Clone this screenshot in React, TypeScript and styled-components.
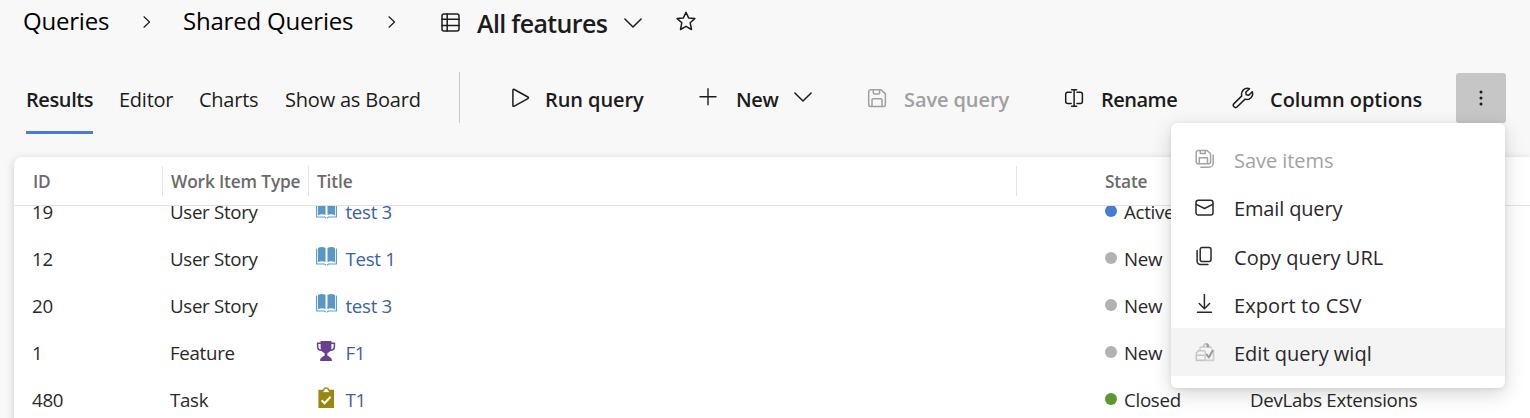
import React from "react";
import styled, { createGlobalStyle } from "styled-components";

const Global = createGlobalStyle`
  * { box-sizing: border-box; }
  body { margin: 0; background: #f8f8f8; overflow: hidden; }
`;

const Page = styled.div`
  width: 1530px;
  height: 418px;
  overflow: hidden;
  display: flex;
  flex-direction: column;
  background: #f8f8f8;
  color: #1c1c1c;
  font-family: "Open Sans", "Noto Sans", sans-serif;
`;

const Breadcrumb = styled.header`
  flex: none;
  height: 44px;
  padding-left: 23px;
  display: flex;
  align-items: center;
`;

const Crumb = styled.span<{ $width: number; $left?: number }>`
  width: ${(p) => p.$width}px;
  margin-left: ${(p) => p.$left ?? 0}px;
  margin-top: -2px;
  letter-spacing: -0.2px;
  font-size: 24px;
  line-height: 44px;
  color: #000;
  white-space: nowrap;
`;

const PageTitle = styled.h1`
  margin: 2px 0 0 17px;
  width: 144px;
  font-size: 25px;
  font-weight: 600;
  letter-spacing: -0.65px;
  line-height: 40px;
  white-space: nowrap;
`;

const Glyph = styled.svg<{ $left?: number; $lift?: number }>`
  display: block;
  flex: none;
  margin-left: ${(p) => p.$left ?? 0}px;
  margin-bottom: ${(p) => p.$lift ?? 0}px;
  fill: none;
  stroke: currentColor;
  stroke-width: 1.5;
  stroke-linecap: round;
  stroke-linejoin: round;
`;

const Toolbar = styled.nav`
  flex: none;
  height: 113px;
  padding: 28px 0 0 26px;
  display: flex;
  align-items: flex-start;
`;

const Tab = styled.a<{ $width: number; $spacing: number; $active?: boolean }>`
  width: ${(p) => p.$width}px;
  height: 62px;
  margin-right: 26px;
  border-bottom: 3px solid ${(p) => (p.$active ? "#4a7bd8" : "transparent")};
  font-size: 20px;
  font-weight: ${(p) => (p.$active ? 600 : 400)};
  letter-spacing: ${(p) => p.$spacing}px;
  line-height: 55px;
  white-space: nowrap;
`;

const Divider = styled.div`
  width: 1px;
  height: 51px;
  margin: 0 50px 0 12px;
  background: #c8c8c8;
`;

const Command = styled.button<{ $width: number; $spacing: number; $disabled?: boolean }>`
  width: ${(p) => p.$width}px;
  height: 51px;
  padding: 0;
  border: 0;
  background: none;
  display: flex;
  align-items: center;
  color: ${(p) => (p.$disabled ? "#a0a0a0" : "#1c1c1c")};
  font: 600 20px "Open Sans", sans-serif;
  letter-spacing: ${(p) => p.$spacing}px;
  line-height: 51px;
  white-space: nowrap;
`;

const CommandLabel = styled.span<{ $gap: number; $width?: number }>`
  margin: 4px 0 0 ${(p) => p.$gap}px;
  width: ${(p) => (p.$width ? p.$width + "px" : "auto")};
  text-align: left;
`;

const MoreAnchor = styled.div`
  position: relative;
  padding-top: 1px;
`;

const MoreButton = styled.button`
  width: 50px;
  height: 50px;
  padding: 0;
  border: 0;
  border-radius: 3px;
  background: #c6c6c6;
  color: #1c1c1c;
  display: flex;
  align-items: center;
  justify-content: center;
`;

const Menu = styled.div`
  position: absolute;
  z-index: 2;
  top: 51px;
  right: 1px;
  width: 334px;
  height: 265px;
  padding: 13px 0 12px;
  border-radius: 6px;
  background: #fff;
  box-shadow: 0 6px 20px rgba(0, 0, 0, 0.16), 0 1px 5px rgba(0, 0, 0, 0.08);
`;

const MenuItem = styled.div<{ $spacing: number; $disabled?: boolean; $hover?: boolean }>`
  height: 48px;
  padding-left: 24px;
  display: flex;
  align-items: center;
  background: ${(p) => (p.$hover ? "#f4f4f4" : "transparent")};
  color: ${(p) => (p.$disabled ? "#a3a3a3" : "#292929")};
  font-size: 20px;
  letter-spacing: ${(p) => p.$spacing}px;
  white-space: nowrap;
`;

const MenuLabel = styled.span`
  margin: 1px 0 0 19px;

  ${MenuItem}:nth-child(n + 3) & {
    margin-top: 3px;
  }
`;

const Card = styled.main`
  flex: none;
  height: 270px;
  margin-left: 14px;
  border-radius: 8px 0 0 0;
  background: #fff;
  box-shadow: 0 2px 9px rgba(0, 0, 0, 0.19);
`;

const Columns = styled.div`
  display: grid;
  grid-template-columns: 148px 146px 708px 80px 145px 1fr;
  align-items: center;
`;

const HeadRow = styled(Columns)`
  height: 49px;
  border-bottom: 1px solid #e3e3e3;
  color: #6b6b6b;
  font-size: 17.3px;
  font-weight: 600;
`;

const HeadCell = styled.div<{ $pad?: number; $line?: boolean }>`
  height: 30px;
  padding-left: ${(p) => p.$pad ?? 8}px;
  border-left: 1px solid ${(p) => (p.$line ? "#e4e4e4" : "transparent")};
  letter-spacing: -0.15px;
  line-height: 31px;
  white-space: nowrap;
`;

const Body = styled.div`
  height: 212px;
  overflow: hidden;
`;

const Rows = styled.div`
  margin-top: -19px;
`;

const Row = styled(Columns)`
  height: 47px;
  color: #292929;
  font-size: 18.7px;
`;

const Cell = styled.div<{ $pad?: number }>`
  display: flex;
  align-items: center;
  height: 47px;
  padding-left: ${(p) => p.$pad ?? 8}px;
  letter-spacing: -0.3px;
  white-space: nowrap;
`;

const CellText = styled.span`
  margin-top: 1px;
`;

const ItemLink = styled.a`
  margin: 1px 0 0 8.5px;
  color: #3c5fa8;
`;

const Dot = styled.i<{ $color: string }>`
  width: 12px;
  height: 12px;
  margin-right: 7px;
  border-radius: 50%;
  background: ${(p) => p.$color};
`;

const CrumbChevron = ({ left }: { left: number }) => (
  <Glyph width="8" height="12" viewBox="0 0 8 12" $left={left}>
    <path d="M1 .8 6.5 6 1 11.2" strokeWidth="1.2" />
  </Glyph>
);

const ChevronDown = ({ left, lift }: { left: number; lift: number }) => (
  <Glyph width="18" height="10" viewBox="0 0 18 10" $left={left} $lift={lift}>
    <path d="M.9 1 9 9l8.1-8" />
  </Glyph>
);

const ListIcon = () => (
  <Glyph width="19" height="19" viewBox="0 0 19 19" $left={45}>
    <rect x="1" y=".9" width="17" height="17" rx="2" />
    <path d="M6.200 1v17M1 6.300h17M1 12.400h17" />
  </Glyph>
);

const StarIcon = () => (
  <Glyph width="20" height="20" viewBox="0 0 20 20" $left={34} $lift={2}>
    <path d="M10 1.200 12.600 6.900l6.200.700-4.600 4.200 1.300 6.700-5.500-3.200-5.500 3.200 1.300-6.700L1.200 7.600l6.200-.7Z" />
  </Glyph>
);

const PlayIcon = () => (
  <Glyph width="19" height="20" viewBox="0 0 19 20" $left={1} $lift={0}>
    <path d="M1.900 2.300c0-.8.6-1.200 1.400-.8L16.900 9c.8.500.8 1.200 0 1.600L3.300 18.200c-.8.400-1.400 0-1.400-.8Z" />
  </Glyph>
);

const PlusIcon = () => (
  <Glyph width="20" height="20" viewBox="0 0 20 20" $lift={1}>
    <path d="M10 1.800v16M2 9.800h16" strokeWidth="1.400" />
  </Glyph>
);

const SaveIcon = () => (
  <Glyph width="20" height="20" viewBox="0 0 20 20">
    <path d="M3.700 1.700H14l4.400 4.200v10.500a2 2 0 0 1-2 2H3.700a2 2 0 0 1-2-2V3.700a2 2 0 0 1 2-2Z" />
    <path d="M6.300 2v3a1 1 0 0 0 1 1h4.200a1 1 0 0 0 1-1V2M5 18v-6a1.200 1.200 0 0 1 1.200-1.200h7.600A1.200 1.200 0 0 1 15 12v6" />
  </Glyph>
);

const RenameIcon = () => (
  <Glyph width="20" height="20" viewBox="0 0 20 20">
    <path d="M7.200 4.300H3.700a2 2 0 0 0-2 2v7.200a2 2 0 0 0 2 2h3.500M13 4.300h3.400a2 2 0 0 1 2 2v7.200a2 2 0 0 1-2 2H13M10.100 1.700v16.600M7.600 1.700h5M7.600 18.300h5" />
  </Glyph>
);

const WrenchIcon = () => (
  <Glyph width="22" height="22" viewBox="0 0 22 22">
    <path d="M17.500 1.800a5.800 5.800 0 0 0-7.700 7.100L2 16.600a2.200 2.200 0 0 0 3.200 3.200l7.900-7.700a5.700 5.700 0 0 0 7.200-7.300l-3.600 3.500-2.500-.6-.5-2.500Z" />
  </Glyph>
);

const SaveAllIcon = () => (
  <Glyph width="20" height="20" viewBox="0 0 20 20" $lift={2}>
    <path d="M3.200 1.500h8.900l3.500 3.300v7.900a2 2 0 0 1-2 2H3.200a2 2 0 0 1-2-2V3.500a2 2 0 0 1 2-2Z" />
    <path d="M5.300 1.800v2.600h5V1.800M4.300 14.500V8.700h8.200v5.800M18.200 6.200v7.800a4.300 4.300 0 0 1-4.300 4.300H5.800" />
  </Glyph>
);

const MailIcon = () => (
  <Glyph width="20" height="20" viewBox="0 0 20 20">
    <rect x="1" y="2.200" width="17" height="14.800" rx="2.300" />
    <path d="m1.300 6.400 8.200 4.100 8.200-4.100" />
  </Glyph>
);

const CopyIcon = () => (
  <Glyph width="20" height="20" viewBox="0 0 20 20">
    <rect x="5.200" y="1.400" width="10.800" height="14" rx="2" />
    <path d="M2.100 4.500v10.700a3.300 3.300 0 0 0 3.300 3.300h7.500" />
  </Glyph>
);

const DownloadIcon = () => (
  <Glyph width="20" height="20" viewBox="0 0 20 20">
    <path d="M9.400.3v14.200M4.200 9.500l5.200 5.200 5.200-5.200M2.500 18.200h14" />
  </Glyph>
);

const WiqlIcon = () => (
  <Glyph width="20" height="20" viewBox="0 0 20 20">
    <path d="M5 8V6.300c0-.8.5-1.200 1.200-1.200h9c.8 0 1.200.4 1.200 1.200" stroke="#cdcdcd" />
    <path d="M8.600 5c0-2 .7-3.300 2.500-3.300S13.900 3 13.900 5" stroke="#c4c4c4" />
    <path d="M11 1.300c1.800 0 3.200 1.500 3.200 3.900h-2.400Z" fill="#9c9c9c" stroke="none" />
    <path d="M1.500 11 3.300 8.700h6M1.300 12v6.400h8.200M2 13.300h7" stroke="#c6c6c6" strokeWidth="1.600" />
    <path d="M10.200 10v8.400h8.300V9" stroke="#cfcfcf" strokeWidth="1.800" />
    <path d="m11.800 12.500 2 3 3.900-7" stroke="#999" strokeWidth="2" />
  </Glyph>
);

const BookIcon = () => (
  <Glyph width="21" height="20" viewBox="0 0 21 20" $lift={3}>
    <path d="M2 2C4.500.8 7.200.8 9.500 2v14C7.200 15 4.500 15 2 16.200ZM11.500 2c2.300-1.200 5-1.200 7.500 0v14.200c-2.500-1.200-5.200-1.200-7.500-.2Z" fill="#5997c7" stroke="none" />
    <path d="M.6 3v15h7.900l1 .8M20.400 3v15h-7.900l-1 .8" stroke="#5f9fcd" strokeWidth="1.200" />
  </Glyph>
);

const TrophyIcon = () => (
  <Glyph width="21" height="20" viewBox="0 0 21 20" $lift={2}>
    <path d="M4.600 0h10.800v6.500c0 3-1.500 4.700-4 5.600v2.700c1.900.6 3.200 1.700 4.400 3.200v2H4.200v-2c1.200-1.500 2.500-2.600 4.400-3.200v-2.700c-2.500-.9-4-2.600-4-5.600Z" fill="#68408f" stroke="none" />
    <path d="M5 2.200H1.600v3.300C1.600 8 3.200 9.300 6 9.300M15 2.200h3.400v3.300c0 2.500-1.600 3.800-4.400 3.800" stroke="#68408f" strokeLinejoin="miter" />
  </Glyph>
);

const TaskIcon = () => (
  <Glyph width="21" height="21" viewBox="0 0 21 21" $lift={3}>
    <path d="M2.400 2.800h4.500A3.300 3.300 0 0 1 13.300 2.800H18V21H2.400Z" fill="#9a8712" stroke="none" />
    <path d="M7.900 3.500a2.200 2.200 0 0 1 4.400 0l1.800 2H6.100Z" fill="#fff" stroke="#9a8712" strokeWidth=".8" />
    <path d="m5.600 13.200 3 3 6-6.500" stroke="#fff" strokeWidth="2" strokeLinecap="butt" strokeLinejoin="miter" />
  </Glyph>
);

const MoreIcon = () => (
  <Glyph width="4" height="18" viewBox="0 0 4 18">
    <g fill="currentColor" stroke="none">
      <circle cx="2" cy="3" r="1.500" />
      <circle cx="2" cy="9" r="1.500" />
      <circle cx="2" cy="15" r="1.500" />
    </g>
  </Glyph>
);

const items = [
  { id: "19", type: "User Story", icon: <BookIcon />, title: "test 3", state: "Active", color: "#477bd0", area: "" },
  { id: "12", type: "User Story", icon: <BookIcon />, title: "Test 1", state: "New", color: "#b2b2b2", area: "" },
  { id: "20", type: "User Story", icon: <BookIcon />, title: "test 3", state: "New", color: "#b2b2b2", area: "" },
  { id: "1", type: "Feature", icon: <TrophyIcon />, title: "F1", state: "New", color: "#b2b2b2", area: "" },
  { id: "480", type: "Task", icon: <TaskIcon />, title: "T1", state: "Closed", color: "#5d9732", area: "DevLabs Extensions" },
];

export default function App() {
  return (
    <Page>
      <Global />
      <Breadcrumb>
        <Crumb $width={86}>Queries</Crumb>
        <CrumbChevron left={34} />
        <Crumb $width={171} $left={32}>Shared Queries</Crumb>
        <CrumbChevron left={34} />
        <ListIcon />
        <PageTitle>All features</PageTitle>
        <ChevronDown left={3} lift={-1} />
        <StarIcon />
      </Breadcrumb>
      <Toolbar>
        <Tab $width={67} $spacing={-0.4} $active>Results</Tab>
        <Tab $width={54} $spacing={-0.25}>Editor</Tab>
        <Tab $width={60} $spacing={-0.25}>Charts</Tab>
        <Tab $width={136} $spacing={-0.2}>Show as Board</Tab>
        <Divider />
        <Command $width={188} $spacing={-0.08}>
          <PlayIcon />
          <CommandLabel $gap={15}>Run query</CommandLabel>
        </Command>
        <Command $width={169} $spacing={-0.3}>
          <PlusIcon />
          <CommandLabel $gap={18} $width={58}>New</CommandLabel>
          <ChevronDown left={0} lift={1} />
        </Command>
        <Command $width={197} $spacing={-0.1} $disabled>
          <SaveIcon />
          <CommandLabel $gap={17}>Save query</CommandLabel>
        </Command>
        <Command $width={168} $spacing={-0.5}>
          <RenameIcon />
          <CommandLabel $gap={17}>Rename</CommandLabel>
        </Command>
        <Command $width={224} $spacing={-0.05}>
          <WrenchIcon />
          <CommandLabel $gap={16}>Column options</CommandLabel>
        </Command>
        <MoreAnchor>
          <MoreButton aria-label="More">
            <MoreIcon />
          </MoreButton>
          <Menu>
            <MenuItem $spacing={-0.05} $disabled>
              <SaveAllIcon />
              <MenuLabel>Save items</MenuLabel>
            </MenuItem>
            <MenuItem $spacing={-0.15}>
              <MailIcon />
              <MenuLabel>Email query</MenuLabel>
            </MenuItem>
            <MenuItem $spacing={0.05}>
              <CopyIcon />
              <MenuLabel>Copy query URL</MenuLabel>
            </MenuItem>
            <MenuItem $spacing={0.1}>
              <DownloadIcon />
              <MenuLabel>Export to CSV</MenuLabel>
            </MenuItem>
            <MenuItem $spacing={0} $hover>
              <WiqlIcon />
              <MenuLabel>Edit query wiql</MenuLabel>
            </MenuItem>
          </Menu>
        </MoreAnchor>
      </Toolbar>
      <Card>
        <HeadRow>
          <HeadCell $pad={18}>ID</HeadCell>
          <HeadCell $line>Work Item Type</HeadCell>
          <HeadCell $line>Title</HeadCell>
          <HeadCell $line />
          <HeadCell>State</HeadCell>
          <HeadCell />
        </HeadRow>
        <Body>
          <Rows>
            {items.map((item) => (
              <Row key={item.id}>
                <Cell $pad={18}><CellText>{item.id}</CellText></Cell>
                <Cell><CellText>{item.type}</CellText></Cell>
                <Cell>
                  {item.icon}
                  <ItemLink>{item.title}</ItemLink>
                </Cell>
                <Cell />
                <Cell $pad={9}>
                  <Dot $color={item.color} />
                  <CellText>{item.state}</CellText>
                </Cell>
                <Cell $pad={9}><CellText>{item.area}</CellText></Cell>
              </Row>
            ))}
          </Rows>
        </Body>
      </Card>
    </Page>
  );
}
